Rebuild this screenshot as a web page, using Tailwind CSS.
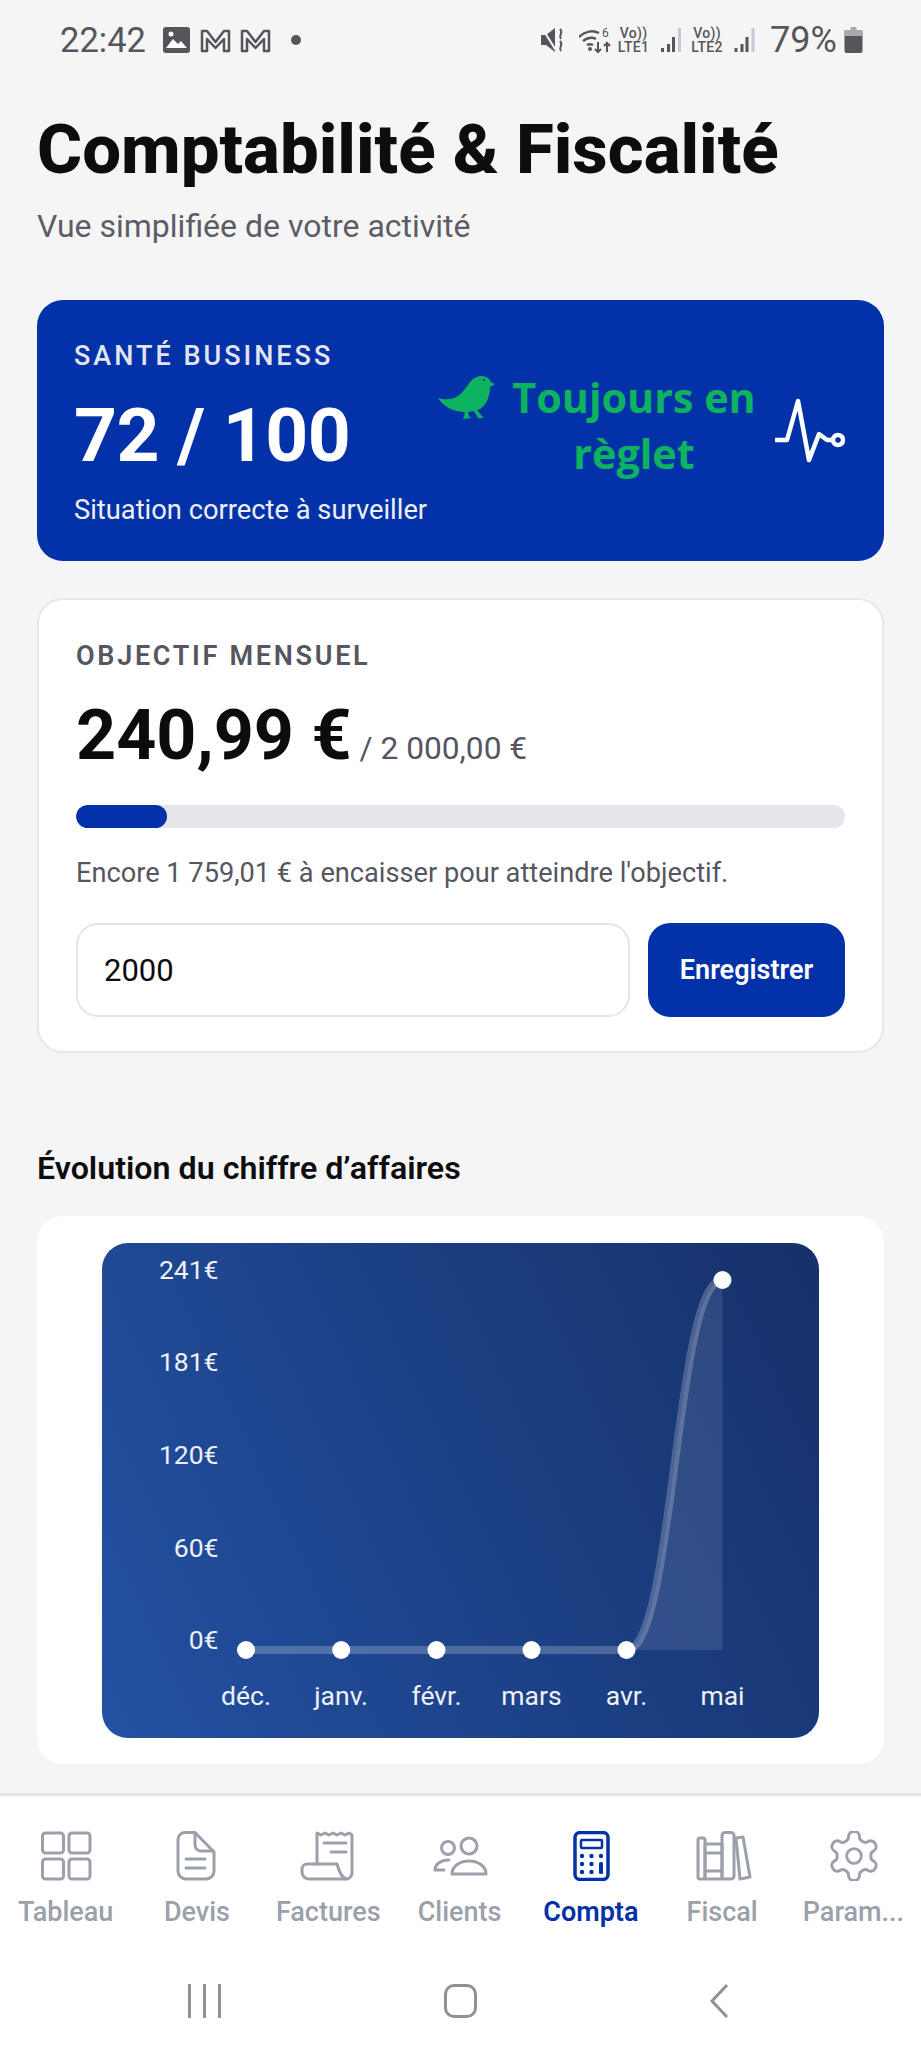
<!DOCTYPE html>
<html lang="fr">
<head>
  <meta charset="UTF-8">
  <meta name="viewport" content="width=device-width, initial-scale=1.0">
  <title>Comptabilité & Fiscalité</title>
  <script src="https://cdn.jsdelivr.net/npm/@tailwindcss/browser@4"></script>
</head>
<body class="bg-[#f5f5f6] font-['Roboto',sans-serif]">
  <div class="w-[921px] h-[2048px] flex flex-col overflow-hidden">

    <!-- Status bar -->
    <div class="h-[80px] shrink-0 flex items-center pl-[60px] pr-[58px] text-[#55555b]">
      <span class="text-[34.500px] leading-none w-[92px]">22:42</span>
      <svg class="w-[27px] h-[26px] ml-[11px]" viewBox="0 0 27 26"><rect width="27" height="26" rx="3" fill="#55555b"/><path d="M3 21l7-9 5 5 3-3 6 7z" fill="#fff"/><circle cx="8" cy="7" r="2.500" fill="#fff"/></svg>
      <svg class="w-[31px] h-[25px] ml-[10px]" viewBox="0 0 31 25" fill="none" stroke="#55555b" stroke-width="2.500" stroke-linejoin="round"><path d="M2 23V3h5l8.500 11L24 3h5v20h-5V11l-8.500 9L7 11v12z"/></svg>
      <svg class="w-[31px] h-[25px] ml-[9px]" viewBox="0 0 31 25" fill="none" stroke="#55555b" stroke-width="2.500" stroke-linejoin="round"><path d="M2 23V3h5l8.500 11L24 3h5v20h-5V11l-8.500 9L7 11v12z"/></svg>
      <span class="w-[10px] h-[10px] rounded-full bg-[#55555b] ml-[20px]"></span>

      <svg class="w-[24px] h-[28px] ml-auto" viewBox="0 0 24 28"><path d="M0 9h5l9-7v24l-9-7H0z" fill="#55555b"/><path d="M1 2l15 24" stroke="#f5f5f6" stroke-width="2"/><path d="M19 3c4 4-2 6 1 10M19 15c4 4-2 6 1 10" stroke="#55555b" stroke-width="2" fill="none"/></svg>
      <svg class="w-[32px] h-[28px] ml-[14px]" viewBox="0 0 32 28" fill="none" stroke="#55555b" stroke-width="2.500"><path d="M0 11c6-6 14-7 20-4M4 15c4-3 9-4 13-2M8 19c2-1 4-1 6 0"/><circle cx="11" cy="23" r="2" fill="#55555b" stroke="none"/><path d="M19 16v10M16 23l3 3 3-3M28 26V16M25 20l3-3 3 3" stroke-width="2"/><text x="23" y="11" font-size="12" fill="#55555b" stroke="none">6</text></svg>
      <div class="w-[33px] ml-[6px] text-[14px] leading-[14px] tracking-[0.300px] text-center font-medium"><div>Vo))</div><div>LTE1</div></div>
      <svg class="w-[23px] h-[26px] ml-[10px]" viewBox="0 0 23 26"><path d="M1 21h3v4H1zM7 17h3v8H7zM12 10h3v15h-3z" fill="#55555b"/><path d="M18 1h3v24h-3z" fill="#c5c8d2"/></svg>
      <div class="w-[34px] ml-[7px] text-[14px] leading-[14px] tracking-[0.300px] text-center font-medium"><div>Vo))</div><div>LTE2</div></div>
      <svg class="w-[24px] h-[26px] ml-[9px]" viewBox="0 0 23 26"><path d="M1 21h3v4H1zM7 17h3v8H7zM12 10h3v15h-3z" fill="#55555b"/><path d="M18 1h3v24h-3z" fill="#c5c8d2"/></svg>
      <span class="w-[68px] text-[36px] leading-none ml-[13px] whitespace-nowrap">79%</span>
      <svg class="w-[19px] h-[26px] ml-[6px]" viewBox="0 0 18 26"><path d="M6 0h6v3H6z" fill="#a8a8ae"/><rect y="3" width="18" height="23" rx="2" fill="#55555b"/><rect y="3" width="18" height="6" fill="#a8a8ae"/></svg>
    </div>

    <!-- Page content -->
    <main class="flex-1 px-[37px] min-h-0">
      <h1 class="mt-[30px] text-[69px] leading-[80px] font-extrabold text-[#0d0d0f] whitespace-nowrap">Comptabilité &amp; Fiscalité</h1>
      <p class="mt-[16px] text-[32px] leading-[40px] text-[#5b5c66]">Vue simplifiée de votre activité</p>

      <!-- Santé business -->
      <section class="mt-[54px] h-[261px] rounded-[26px] bg-[#0332a8] pl-[37px] pr-[39px] flex items-center">
        <div class="self-start pt-[41px]">
          <div class="text-[27px] leading-[30px] font-medium tracking-[3px] text-[#e2e5ee]">SANTÉ BUSINESS</div>
          <div class="mt-[24px] text-[75px] leading-[80px] font-bold tracking-[-0.500px] text-white whitespace-nowrap">72 / 100</div>
          <div class="mt-[17px] text-[27.300px] leading-[36px] text-[#eef0f6] whitespace-nowrap">Situation correcte à surveiller</div>
        </div>
        <div class="ml-auto flex items-center">
          <svg class="w-[80px] h-[65px] mb-[66px] -mr-[4px]" viewBox="0 0 80 65"><path d="M8 33C14 35 22 35 28 31C34 27 37 20 42 15C47 10 54 10 58 13C60 15 61 17 62 18L65 19L60 22C60 32 56 40 50 44L47 45L52 51L54 53L48 53L44 46L38 47L39 51L41 53L33 54L34 51L35 47C24 47 14 42 8 33Z" fill="#0db35f"/><circle cx="54" cy="15" r="1" fill="#0332a8"/></svg>
          <div class="w-[256px] text-center font-['Open_Sans',sans-serif] font-bold text-[41.300px] leading-[56px] text-[#0db35f] mb-[12px]">Toujours en règlet</div>
          <svg class="w-[70px] h-[66px] ml-[13px]" viewBox="0 0 70 66" fill="none" stroke="#fff" stroke-width="4.500" stroke-linejoin="round" stroke-linecap="round"><path d="M1 42H12L23 3L34 62L44 36L52 42H57"/><circle cx="63" cy="42" r="5"/></svg>
        </div>
      </section>

      <!-- Objectif mensuel -->
      <section class="mt-[37px] rounded-[26px] bg-white border-2 border-[#e6e7ea] px-[37px] pt-[41px] pb-[34px]">
        <div class="text-[27px] leading-[30px] font-semibold tracking-[2.700px] text-[#55565f]">OBJECTIF MENSUEL</div>
        <div class="mt-[24px] h-[80px] flex items-baseline whitespace-nowrap">
          <span class="text-[70px] leading-[80px] font-bold text-[#0c0c0e]">240,99 €</span>
          <span class="ml-[8px] text-[31.700px] leading-none text-[#55565f]">/ 2 000,00 €</span>
        </div>
        <div class="mt-[30px] h-[23px] rounded-full bg-[#e5e6eb] overflow-hidden">
          <div class="h-full w-[91px] rounded-full bg-[#0332a8]"></div>
        </div>
        <p class="mt-[27px] text-[27.200px] leading-[36px] text-[#55565f] whitespace-nowrap">Encore 1 759,01 € à encaisser pour atteindre l'objectif.</p>
        <div class="mt-[32px] flex gap-[18px] h-[94px]">
          <input value="2000" class="w-[554px] h-full rounded-[22px] border-2 border-[#e4e5e9] bg-white px-[26px] text-[31px] text-[#0c0c0e] outline-none">
          <button class="flex-1 rounded-[22px] bg-[#0332a8] text-white text-[27px] font-semibold">Enregistrer</button>
        </div>
      </section>

      <h2 class="mt-[95px] text-[32.200px] leading-[40px] font-semibold text-[#0d0d0f] whitespace-nowrap">Évolution du chiffre d’affaires</h2>

      <!-- Chart -->
      <section class="mt-[28px] rounded-[26px] bg-white px-[65px] pt-[27px] pb-[26px]">
        <div class="h-[495px] rounded-[26px] bg-linear-65 from-[#2351a3] to-[#16316a] overflow-hidden">
          <svg class="w-full h-full" viewBox="0 0 716 495">
            <path d="M524 407C572 407 572 37 620 37V407Z" fill="#fff" fill-opacity="0.1"/>
            <path d="M143 407H524C572 407 572 37 620 37" fill="none" stroke="#fff" stroke-opacity="0.22" stroke-width="8"/>
            <g fill="#fff">
              <circle cx="143.500" cy="407" r="9"/>
              <circle cx="238.700" cy="407" r="9"/>
              <circle cx="334" cy="407" r="9"/>
              <circle cx="429" cy="407" r="9"/>
              <circle cx="524" cy="407" r="9"/>
              <circle cx="620" cy="37" r="9"/>
            </g>
            <g fill="#eef1f8" font-size="26.500" text-anchor="end">
              <text x="116" y="36">241€</text>
              <text x="116" y="128">181€</text>
              <text x="116" y="221">120€</text>
              <text x="116" y="314">60€</text>
              <text x="116" y="406">0€</text>
            </g>
            <g fill="#eef1f8" font-size="26.500" text-anchor="middle">
              <text x="143.500" y="462">déc.</text>
              <text x="238.700" y="462">janv.</text>
              <text x="334" y="462">févr.</text>
              <text x="429" y="462">mars</text>
              <text x="524" y="462">avr.</text>
              <text x="620" y="462">mai</text>
            </g>
          </svg>
        </div>
      </section>
    </main>

    <!-- Bottom navigation -->
    <nav class="shrink-0 bg-white border-t-[3px] border-[#e6e6e8] pt-[35px] h-[255px] flex flex-col">
      <div class="grid grid-cols-[repeat(7,131.300px)] text-[#9ca0ab] text-[27px] font-medium leading-[32px] text-center">
        <div class="flex flex-col items-center">
          <svg class="w-[60px] h-[50px]" viewBox="0 0 60 50" fill="none" stroke="currentColor" stroke-width="3"><rect x="6.500" y="2" width="21" height="20" rx="3"/><rect x="33" y="2" width="21" height="20" rx="3"/><rect x="6.500" y="28" width="21" height="20" rx="3"/><rect x="33" y="28" width="21" height="20" rx="3"/></svg>
          <span class="mt-[15px]">Tableau</span>
        </div>
        <div class="flex flex-col items-center">
          <svg class="w-[60px] h-[50px]" viewBox="0 0 60 50" fill="none" stroke="currentColor" stroke-width="3" stroke-linecap="round" stroke-linejoin="round"><path d="M18 1.500H28L47 21V40A8 8 0 0 1 39 48H19A8 8 0 0 1 11 40V8.500A7 7 0 0 1 18 1.500Z"/><path d="M28 2V14A6 6 0 0 0 34 20H46M19 28H38M19 37H38"/></svg>
          <span class="mt-[15px]">Devis</span>
        </div>
        <div class="flex flex-col items-center">
          <svg class="w-[60px] h-[50px]" viewBox="0 0 60 50" fill="none" stroke="currentColor" stroke-width="3" stroke-linecap="round" stroke-linejoin="round"><path d="M19 33V2L23 4L27 2L31 4L35 2L39 4L43 2L47 4L51 2L54 4V42A6 6 0 0 1 48 48"/><path d="M26 12H48M33 21H48"/><path d="M9 33H39C41 40 43 46 48 48H11A7 7 0 0 1 4 41V38A5 5 0 0 1 9 33Z"/></svg>
          <span class="mt-[15px]">Factures</span>
        </div>
        <div class="flex flex-col items-center">
          <svg class="w-[60px] h-[50px]" viewBox="0 0 60 50" fill="none" stroke="currentColor" stroke-width="3" stroke-linecap="round" stroke-linejoin="round"><circle cx="18" cy="17" r="6.500"/><circle cx="39" cy="15" r="8"/><path d="M22 43C22 35 30 30 39 30C48 30 56 35 56 43Z"/><path d="M14 39H5C5 33 11 29 19 29"/></svg>
          <span class="mt-[15px]">Clients</span>
        </div>
        <div class="flex flex-col items-center text-[#0332a8]">
          <svg class="w-[60px] h-[50px]" viewBox="0 0 60 50"><rect x="14" y="1.500" width="33" height="47" rx="5" fill="#fff" stroke="currentColor" stroke-width="3.500"/><rect x="20" y="9" width="21" height="8" rx="1" fill="none" stroke="currentColor" stroke-width="2.500"/><g fill="currentColor"><circle cx="21" cy="25" r="2.200"/><circle cx="30.500" cy="25" r="2.200"/><circle cx="40" cy="25" r="2.200"/><circle cx="21" cy="33" r="2.200"/><circle cx="30.500" cy="33" r="2.200"/><circle cx="21" cy="41" r="2.200"/><circle cx="30.500" cy="41" r="2.200"/><rect x="38" y="31" width="4" height="12" rx="1.500"/></g></svg>
          <span class="mt-[15px] font-semibold">Compta</span>
        </div>
        <div class="flex flex-col items-center">
          <svg class="w-[60px] h-[50px]" viewBox="0 0 60 50" fill="none" stroke="currentColor" stroke-width="3" stroke-linejoin="round"><rect x="6" y="7" width="7" height="41" rx="2"/><path d="M13 13H30V48H13ZM13 22H30M13 40H30"/><rect x="30" y="1.500" width="12" height="46.500" rx="3"/><path d="M44 7L51 6L58 46L48 48Z"/></svg>
          <span class="mt-[15px]">Fiscal</span>
        </div>
        <div class="flex flex-col items-center">
          <svg class="w-[60px] h-[50px]" viewBox="0 0 60 50" fill="none" stroke="currentColor" stroke-linecap="round" stroke-linejoin="round"><g transform="translate(1.600,-4.400) scale(2.450)" stroke-width="1.200"><path d="M12.220 2h-.44a2 2 0 0 0-2 2v.18a2 2 0 0 1-1 1.730l-.43.25a2 2 0 0 1-2 0l-.15-.08a2 2 0 0 0-2.730.73l-.22.38a2 2 0 0 0 .73 2.730l.15.1a2 2 0 0 1 1 1.720v.51a2 2 0 0 1-1 1.740l-.15.09a2 2 0 0 0-.73 2.730l.22.38a2 2 0 0 0 2.730.73l.15-.08a2 2 0 0 1 2 0l.43.25a2 2 0 0 1 1 1.730V20a2 2 0 0 0 2 2h.44a2 2 0 0 0 2-2v-.18a2 2 0 0 1 1-1.730l.43-.25a2 2 0 0 1 2 0l.15.08a2 2 0 0 0 2.730-.73l.22-.39a2 2 0 0 0-.73-2.730l-.15-.08a2 2 0 0 1-1-1.740v-.5a2 2 0 0 1 1-1.740l.15-.09a2 2 0 0 0 .73-2.730l-.22-.38a2 2 0 0 0-2.730-.73l-.15.08a2 2 0 0 1-2 0l-.43-.25a2 2 0 0 1-1-1.730V4a2 2 0 0 0-2-2z"/><circle cx="12" cy="12" r="3"/></g></svg>
          <span class="mt-[15px] whitespace-nowrap">Param...</span>
        </div>
      </div>

      <!-- Android buttons -->
      <div class="mt-[56px] h-[36px] relative text-[#8f9199]">
        <div class="absolute left-[188px] top-0 flex gap-[12px]">
          <span class="w-[3px] h-[34px] bg-current"></span><span class="w-[3px] h-[34px] bg-current"></span><span class="w-[3px] h-[34px] bg-current"></span>
        </div>
        <span class="absolute left-[444px] top-0 w-[33px] h-[34px] rounded-[10px] border-[3px] border-current"></span>
        <svg class="absolute left-[709px] top-0 w-[20px] h-[34px]" viewBox="0 0 20 34" fill="none" stroke="currentColor" stroke-width="3"><path d="M18 1L3 17L18 33"/></svg>
      </div>
    </nav>
  </div>
</body>
</html>
